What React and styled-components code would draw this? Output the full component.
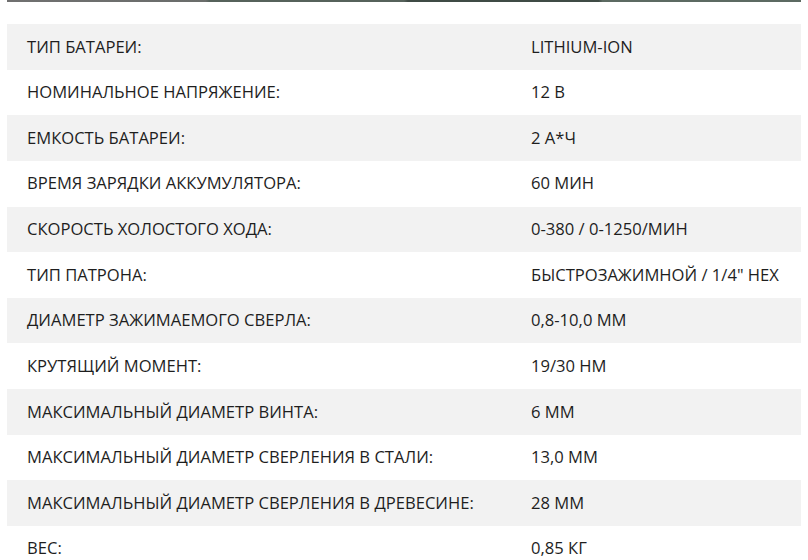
import styled, { createGlobalStyle } from "styled-components";

const Global = createGlobalStyle`
  body {
    margin: 0;
    background: #fff;
    font-family: "Open Sans", "Noto Sans", sans-serif;
  }
`

const Page = styled.div`
  padding: 0 7px;
`

// остаток картинки над таблицей
const TopStrip = styled.div`
  height: 2px;
  margin-bottom: 22px;
  background: linear-gradient(
    to right,
    #707070 0%,
    #6a6d6b 25%,
    #56625b 25.5%,
    #56625b 50%,
    #3f4b45 50.5%,
    #3f4b45 74.5%,
    #5c6a62 75%,
    #5c6a62 100%
  );
`

const Table = styled.div`
  display: flex;
  flex-direction: column;
`

const Row = styled.div`
  display: grid;
  grid-template-columns: 498px 1fr;
  height: 45.64px;
  align-items: center;
  background-color: ${props => props.shaded ? '#f2f2f2' : '#ffffff'};
  font-size: 16.6px;
  line-height: 1;
  color: #1e1e1e;
  text-transform: uppercase;
  .label {
    padding-left: 20px;
  }
  .value {
    padding-left: 26px;
    white-space: nowrap;
  }
`

const specs = [
  ['Тип батареи:', 'Lithium-ion'],
  ['Номинальное напряжение:', '12 В'],
  ['Емкость батареи:', '2 А*ч'],
  ['Время зарядки аккумулятора:', '60 мин'],
  ['Скорость холостого хода:', '0-380 / 0-1250/мин'],
  ['Тип патрона:', 'быстрозажимной / 1/4" HEX'],
  ['Диаметр зажимаемого сверла:', '0,8-10,0 мм'],
  ['Крутящий момент:', '19/30 Нм'],
  ['Максимальный диаметр винта:', '6 мм'],
  ['Максимальный диаметр сверления в стали:', '13,0 мм'],
  ['Максимальный диаметр сверления в древесине:', '28 мм'],
  ['Вес:', '0,85 кг'],
]

export default function App() {
  return (
    <Page>
      <Global />
      <TopStrip />
      <Table>
        {specs.map(([label, value], i) => (
          <Row key={label} shaded={i % 2 === 0}>
            <span className="label">{label}</span>
            <span className="value">{value}</span>
          </Row>
        ))}
      </Table>
    </Page>
  )
}
